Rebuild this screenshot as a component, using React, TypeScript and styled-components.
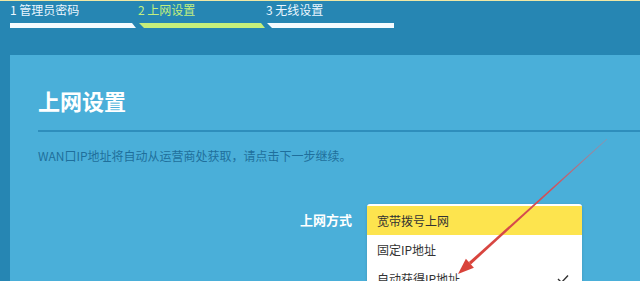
import styled, { createGlobalStyle } from "styled-components"

const GlobalStyles = createGlobalStyle`
  *,
  *::before,
  *::after {
    box-sizing: border-box;
    margin: 0;
    padding: 0;
  }

  html, body {
    width: 640px;
    height: 281px;
    overflow: hidden;
  }

  body {
    font-family: "Noto Sans CJK SC", "Noto Sans", sans-serif;
    background: #2686b3;
  }
`

const StyledPage = styled.main`
  position: relative;
  height: 281px;
  border-top: 1px solid #efe7a4;
  background: #2686b3;
  overflow: hidden;
`

const StyledSteps = styled.div`
  display: flex;
  padding: 1px 0 0 10px;
`

const StyledStep = styled.div<{ $active: boolean }>`
  width: 128px;
  font-size: 12px;
  line-height: 16px;
  color: ${(props) => (props.$active ? "#c2ef7f" : "#eaf6ff")};
`

const StyledBar = styled.div<{ $active: boolean; $first: boolean; $last: boolean }>`
  height: 5px;
  margin-top: 5px;
  width: ${(props) => (props.$last ? "127px" : "126px")};
  margin-left: ${(props) => (props.$first ? "0" : "1px")};
  background: ${(props) => (props.$active ? "#c6ef7b" : "#f4fbff")};
  clip-path: ${(props) =>
    props.$first
      ? "polygon(0 0, calc(100% - 4px) 0, 100% 100%, 0 100%)"
      : props.$last
      ? "polygon(0 0, 100% 0, 100% 100%, 5px 100%)"
      : "polygon(0 0, calc(100% - 4px) 0, 100% 100%, 5px 100%)"};
`

const StyledPanel = styled.section`
  margin: 27px 0 0 10px;
  height: 260px;
  background: #4aafd9;
  padding: 32px 0 0 28px;
`

const StyledTitle = styled.h1`
  font-size: 22px;
  font-weight: 700;
  line-height: 26px;
  color: #ffffff;
`

const StyledDivider = styled.div`
  height: 2px;
  background: #2e8ebc;
  margin-top: 17px;
`

const StyledHint = styled.p`
  margin-top: 16px;
  font-size: 12px;
  line-height: 16px;
  color: #1f6f9c;
`

const StyledFormRow = styled.div`
  display: flex;
  align-items: flex-start;
  margin-top: 40px;
  padding-left: 262px;
`

const StyledLabel = styled.label`
  width: 52px;
  margin-top: 8px;
  font-size: 13px;
  font-weight: 700;
  line-height: 16px;
  color: #ffffff;
  white-space: nowrap;
`

const StyledMenu = styled.ul`
  list-style: none;
  width: 215px;
  margin-left: 15px;
  padding-top: 2px;
  background: #ffffff;
  border-radius: 3px;
  box-shadow: 0 1px 3px rgba(0, 0, 0, 0.15);
  overflow: hidden;
`

const StyledOption = styled.li<{ $highlighted: boolean }>`
  display: flex;
  align-items: center;
  justify-content: space-between;
  height: 29px;
  padding: 0 13px 0 10px;
  font-size: 12px;
  color: #333333;
  background: ${(props) => (props.$highlighted ? "#fde44e" : "#ffffff")};
`

const StyledArrow = styled.svg`
  position: absolute;
  top: 0;
  left: 0;
  pointer-events: none;
`

const steps = ["1 管理员密码", "2 上网设置", "3 无线设置"]
const options = ["宽带拨号上网", "固定IP地址", "自动获得IP地址"]

const App = () => {
  return (
    <>
      <GlobalStyles />
      <StyledPage>
        <StyledSteps>
          {steps.map((step, index) => (
            <StyledStep key={step} $active={index === 1}>
              {step}
              <StyledBar
                $active={index === 1}
                $first={index === 0}
                $last={index === steps.length - 1}
              />
            </StyledStep>
          ))}
        </StyledSteps>

        <StyledPanel>
          <StyledTitle>上网设置</StyledTitle>
          <StyledDivider />
          <StyledHint>WAN口IP地址将自动从运营商处获取，请点击下一步继续。</StyledHint>

          <StyledFormRow>
            <StyledLabel>上网方式</StyledLabel>
            <StyledMenu>
              {options.map((option, index) => (
                <StyledOption key={option} $highlighted={index === 0}>
                  {option}
                  {index === 2 && (
                    <svg width="12" height="10" viewBox="0 0 12 10">
                      <polyline
                        points="1,5 4.5,8.5 11,1.5"
                        fill="none"
                        stroke="#333"
                        strokeWidth="1.4"
                      />
                    </svg>
                  )}
                </StyledOption>
              ))}
            </StyledMenu>
          </StyledFormRow>
        </StyledPanel>

        <StyledArrow width="640" height="281" viewBox="0 0 640 281">
          <defs>
            <linearGradient id="shaft" x1="607" y1="138" x2="470" y2="262" gradientUnits="userSpaceOnUse">
              <stop offset="0" stopColor="#c27a8a" stopOpacity="0.6" />
              <stop offset="0.4" stopColor="#d2505a" />
              <stop offset="1" stopColor="#d9433a" />
            </linearGradient>
          </defs>
          <polygon
            points="607.2,138.2 606.8,137.8 468.9,261.1 470.9,263.4"
            fill="url(#shaft)"
          />
          <polygon points="458,273 473.9,266.7 465.9,257.8" fill="#d9433a" />
        </StyledArrow>
      </StyledPage>
    </>
  )
}

export default App
